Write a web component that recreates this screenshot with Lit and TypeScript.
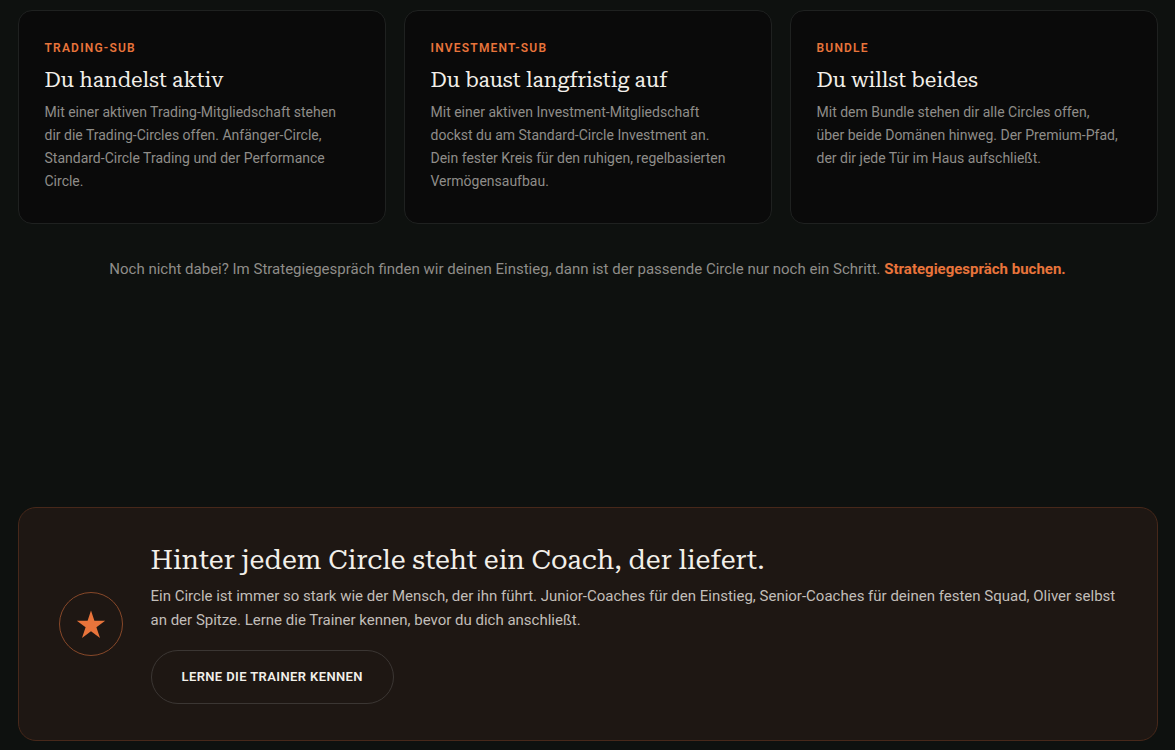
import { LitElement, html, css } from "lit";
import { customElement, property } from "lit/decorators.js";

interface Membership {
  label: string;
  title: string;
  text: string;
}

const MEMBERSHIPS: Membership[] = [
  {
    label: "Trading-Sub",
    title: "Du handelst aktiv",
    text: "Mit einer aktiven Trading-Mitgliedschaft stehen dir die Trading-Circles offen. Anfänger-Circle, Standard-Circle Trading und der Performance Circle.",
  },
  {
    label: "Investment-Sub",
    title: "Du baust langfristig auf",
    text: "Mit einer aktiven Investment-Mitgliedschaft dockst du am Standard-Circle Investment an. Dein fester Kreis für den ruhigen, regelbasierten Vermögensaufbau.",
  },
  {
    label: "Bundle",
    title: "Du willst beides",
    text: "Mit dem Bundle stehen dir alle Circles offen, über beide Domänen hinweg. Der Premium-Pfad, der dir jede Tür im Haus aufschließt.",
  },
];

@customElement("membership-card")
export class MembershipCard extends LitElement {
  @property({ attribute: false }) item!: Membership;

  static styles = css`
    :host {
      display: block;
      box-sizing: border-box;
      padding: 26px 26px 30px;
      border: 1px solid #1f2120;
      border-radius: 14px;
      background: #0a0a0a;
    }
    .label {
      margin: 0 0 8px;
      font-size: 12px;
      line-height: 22px;
      font-weight: 600;
      letter-spacing: 0.1em;
      text-transform: uppercase;
      color: #e8743b;
    }
    .title {
      margin: 0 0 8px;
      font-family: "Roboto Serif", "DejaVu Serif", serif;
      font-size: 21px;
      line-height: 26px;
      font-weight: 400;
      color: #f2efe9;
    }
    .text {
      margin: 0;
      padding-right: 12px;
      font-size: 14px;
      line-height: 23px;
      color: #8f8d89;
    }
  `;

  render() {
    return html`
      <p class="label">${this.item.label}</p>
      <h3 class="title">${this.item.title}</h3>
      <p class="text">${this.item.text}</p>
    `;
  }
}

@customElement("coach-banner")
export class CoachBanner extends LitElement {
  static styles = css`
    :host {
      display: grid;
      grid-template-columns: auto 1fr;
      align-items: center;
      gap: 28px;
      box-sizing: border-box;
      padding: 36px 40px;
      border: 1px solid #47281a;
      border-radius: 18px;
      background: #1e1713;
    }
    .badge {
      display: grid;
      place-items: center;
      box-sizing: border-box;
      width: 64px;
      height: 64px;
      border: 1px solid #874829;
      border-radius: 50%;
    }
    .star {
      display: block;
      width: 30px;
      height: 30px;
      fill: #e8743b;
    }
    .title {
      margin: 0 0 8px;
      font-family: "Roboto Serif", "DejaVu Serif", serif;
      font-size: 27px;
      line-height: 32px;
      font-weight: 400;
      color: #f2efe9;
    }
    .text {
      margin: 0 0 18px;
      font-size: 15px;
      line-height: 24px;
      color: #c2beb9;
    }
    .button {
      display: inline-block;
      padding: 16px 30px;
      border: 1px solid #3b3633;
      border-radius: 999px;
      font-size: 13px;
      line-height: 20px;
      font-weight: 600;
      letter-spacing: 0.03em;
      text-transform: uppercase;
      text-decoration: none;
      vertical-align: top;
      color: #f2efe9;
    }
  `;

  render() {
    return html`
      <div class="badge">
        <svg class="star" viewBox="0 0 30 30" aria-hidden="true">
          <path d="M15 1.5 18.4 11.8H29.2L20.4 18.2 24 29 15 22.3 6 29 9.6 18.2.8 11.8H11.6Z" />
        </svg>
      </div>
      <div>
        <h2 class="title">Hinter jedem Circle steht ein Coach, der liefert.</h2>
        <p class="text">
          Ein Circle ist immer so stark wie der Mensch, der ihn führt. Junior-Coaches für den Einstieg, Senior-Coaches
          für deinen festen Squad, Oliver selbst an der Spitze. Lerne die Trainer kennen, bevor du dich anschließt.
        </p>
        <a class="button" href="#trainer">Lerne die Trainer kennen</a>
      </div>
    `;
  }
}

@customElement("app-root")
export class AppRoot extends LitElement {
  static styles = css`
    :host {
      display: block;
      box-sizing: border-box;
      min-height: 100vh;
      padding: 10px 16px 9px;
      background: #0e110f;
      font-family: Roboto, sans-serif;
    }
    .page {
      max-width: 1140px;
      margin: 0 auto;
    }
    .cards {
      display: grid;
      grid-template-columns: repeat(auto-fit, minmax(300px, 1fr));
      gap: 18px;
    }
    .note {
      margin: 32px 0 0;
      font-size: 15px;
      line-height: 26px;
      text-align: center;
      color: #8f8d89;
    }
    .link {
      font-weight: 700;
      color: #e8743b;
      text-decoration: none;
    }
    .coach {
      margin-top: 225px;
    }
  `;

  render() {
    return html`
      <main class="page">
        <section class="cards">
          ${MEMBERSHIPS.map((item) => html`<membership-card .item=${item}></membership-card>`)}
        </section>
        <p class="note">
          Noch nicht dabei? Im Strategiegespräch finden wir deinen Einstieg, dann ist der passende Circle nur noch ein
          Schritt. <a class="link" href="#strategiegespraech">Strategiegespräch buchen.</a>
        </p>
        <coach-banner class="coach"></coach-banner>
      </main>
    `;
  }
}
